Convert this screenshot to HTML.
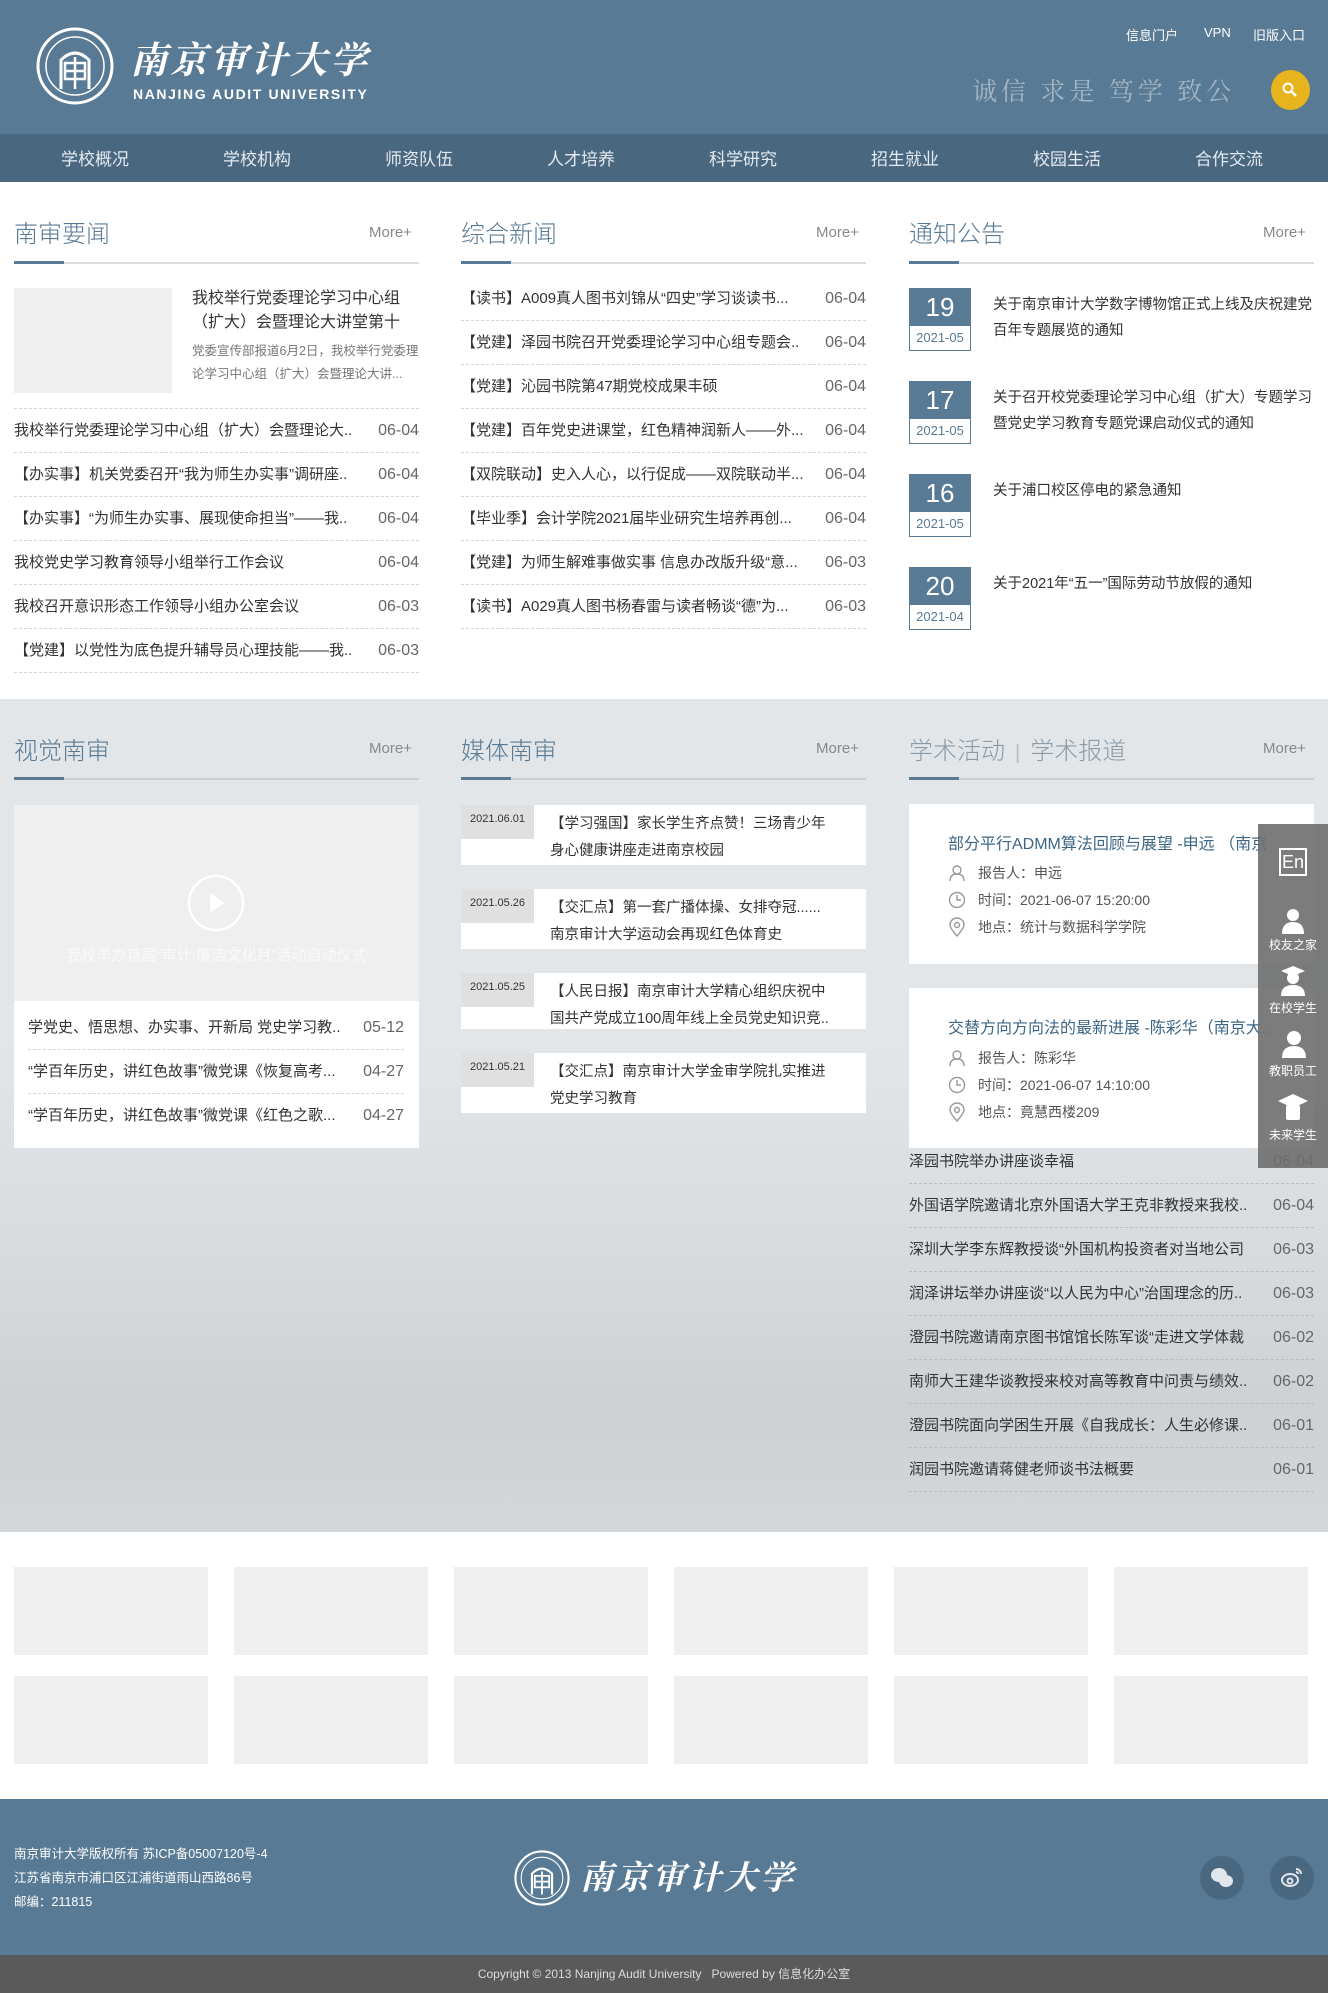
<!DOCTYPE html>
<html><head><meta charset="utf-8"><style>
*{margin:0;padding:0;box-sizing:border-box}
body{width:1328px;height:1993px;position:relative;overflow:hidden;font-family:"Liberation Sans","Noto Sans CJK SC",sans-serif;color:#333;background:#fff}
.a{position:absolute;white-space:nowrap}
.hdr{position:absolute;left:0;top:0;width:1328px;height:134px;background:#587a94}
.nav{position:absolute;left:0;top:134px;width:1328px;height:48px;background:#4a6780}
.nav span{position:absolute;top:11px;width:162px;text-align:center;color:#e4ebf0;font-size:17px}
.ttl{position:absolute;font-size:24px;color:#587a94;font-weight:300}
.more{position:absolute;font-size:15px;color:#888}
.ul{position:absolute;height:2px;background:#dcdcdc}
.ul i{position:absolute;left:0;top:0;width:50px;height:3px;background:#587a94;margin-top:-1px}
.li{position:absolute;font-size:15px;color:#333;height:44px;line-height:44px;border-bottom:1px dashed #d4d4d4}
.li b{position:absolute;right:0;top:0;font-weight:normal;color:#666;font-size:16px}
.db{position:absolute;left:909px;width:62px;height:63px;border:1px solid #587a94;background:#fff}
.db .n{height:37px;background:#587a94;color:#fff;font-size:26px;text-align:center;line-height:37px}
.db .m{color:#587a94;font-size:13px;text-align:center;line-height:24px}
.nt{position:absolute;left:993px;width:320px;font-size:14.5px;line-height:26px;color:#333}
.mc{position:absolute;left:461px;width:405px;height:60px;background:#fff}
.mc .d{position:absolute;left:0;top:0;width:73px;height:34px;background:#e0e0e0;font-size:11px;text-align:center;line-height:28px}
.mc .t{position:absolute;left:89px;top:6px;width:300px;font-size:14.5px;line-height:27px;white-space:nowrap;overflow:hidden}
.card{position:absolute;left:909px;width:405px;height:160px;background:#fff}
.card .h{position:absolute;left:39px;top:26px;font-size:16px;color:#3d6685;white-space:nowrap}
.card .r{position:absolute;left:69px;font-size:14px;color:#555}
.card svg{position:absolute;left:39px}
.side{position:absolute;left:1258px;top:824px;width:70px;height:344px;background:rgba(110,110,110,.9)}
.side div{position:absolute;width:70px;text-align:center;color:#fff;font-size:12px}
.logo{position:absolute;top:1567px;width:194px;height:88px;background:#efefef}
</style></head><body>
<div class="hdr"></div>
<svg class="a" style="left:36px;top:27px" width="78" height="78" viewBox="0 0 78 78"><circle cx="39" cy="39" r="37" fill="none" stroke="#fff" stroke-width="3"/><circle cx="39" cy="39" r="29" fill="none" stroke="#fff" stroke-width="1.5"/><path d="M25 62V33q14-14 28 0v29" fill="none" stroke="#fff" stroke-width="3"/><rect x="29" y="36" width="20" height="16" fill="none" stroke="#fff" stroke-width="2.5"/><path d="M39 30v32M29 44h20" stroke="#fff" stroke-width="2.5"/></svg>
<div class="a" style="left:130px;top:30px;font-family:'Noto Serif CJK SC',serif;font-size:37px;color:#fff;font-style:italic;letter-spacing:3px;font-weight:bold">南京审计大学</div>
<div class="a" style="left:133px;top:86px;font-size:14px;font-weight:bold;color:#fff;letter-spacing:1.6px">NANJING AUDIT UNIVERSITY</div>
<div class="a" style="left:1126px;top:25px;font-size:13px;color:#fff">信息门户</div>
<div class="a" style="left:1204px;top:25px;font-size:13px;color:#fff">VPN</div>
<div class="a" style="left:1253px;top:25px;font-size:13px;color:#fff">旧版入口</div>
<div class="a" style="left:972px;top:72px;font-family:'Noto Serif CJK SC',serif;font-size:25px;color:#a3b6c5;letter-spacing:4px">诚信 求是 笃学 致公</div>
<div class="a" style="left:1271px;top:70px;width:39px;height:40px;border-radius:50%;background:#e8b41e"></div>
<svg class="a" style="left:1281px;top:81px" width="18" height="18"><circle cx="7" cy="7" r="4.5" fill="none" stroke="#fff" stroke-width="2"/><path d="M10 10l5 5" stroke="#fff" stroke-width="2.5"/></svg>
<div class="nav"><span style="left:14px">学校概况</span><span style="left:176px">学校机构</span><span style="left:338px">师资队伍</span><span style="left:500px">人才培养</span><span style="left:662px">科学研究</span><span style="left:824px">招生就业</span><span style="left:986px">校园生活</span><span style="left:1148px">合作交流</span></div>

<!-- section 1 -->
<div class="ttl a" style="left:14px;top:214px">南审要闻</div><div class="more a" style="left:369px;top:224px">More+</div><div class="ul" style="left:14px;top:262px;width:405px"><i></i></div>
<div class="ttl a" style="left:461px;top:214px">综合新闻</div><div class="more a" style="left:816px;top:224px">More+</div><div class="ul" style="left:461px;top:262px;width:405px"><i></i></div>
<div class="ttl a" style="left:909px;top:214px">通知公告</div><div class="more a" style="left:1263px;top:224px">More+</div><div class="ul" style="left:909px;top:262px;width:405px"><i></i></div>

<div class="a" style="left:14px;top:288px;width:158px;height:105px;background:#efefef"></div>
<div class="a" style="left:192px;top:287px;width:228px;font-size:16px;line-height:24px;color:#333;white-space:normal;overflow:hidden;height:48px">我校举行党委理论学习中心组（扩大）会暨理论大讲堂第十一...</div>
<div class="a" style="left:192px;top:340px;width:228px;font-size:12.5px;line-height:23px;color:#777;white-space:normal;overflow:hidden;height:46px">党委宣传部报道6月2日，我校举行党委理论学习中心组（扩大）会暨理论大讲...</div>
<div class="a" style="left:14px;top:408px;width:405px;border-top:1px dashed #d4d4d4"></div>
<div class="li" style="left:14px;top:409px;width:405px">我校举行党委理论学习中心组（扩大）会暨理论大..<b>06-04</b></div>
<div class="li" style="left:14px;top:453px;width:405px">【办实事】机关党委召开“我为师生办实事”调研座..<b>06-04</b></div>
<div class="li" style="left:14px;top:497px;width:405px">【办实事】“为师生办实事、展现使命担当”——我..<b>06-04</b></div>
<div class="li" style="left:14px;top:541px;width:405px">我校党史学习教育领导小组举行工作会议<b>06-04</b></div>
<div class="li" style="left:14px;top:585px;width:405px">我校召开意识形态工作领导小组办公室会议<b>06-03</b></div>
<div class="li" style="left:14px;top:629px;width:405px">【党建】以党性为底色提升辅导员心理技能——我..<b>06-03</b></div>

<div class="li" style="left:461px;top:277px;width:405px">【读书】A009真人图书刘锦从“四史”学习谈读书...<b>06-04</b></div>
<div class="li" style="left:461px;top:321px;width:405px">【党建】泽园书院召开党委理论学习中心组专题会..<b>06-04</b></div>
<div class="li" style="left:461px;top:365px;width:405px">【党建】沁园书院第47期党校成果丰硕<b>06-04</b></div>
<div class="li" style="left:461px;top:409px;width:405px">【党建】百年党史进课堂，红色精神润新人——外...<b>06-04</b></div>
<div class="li" style="left:461px;top:453px;width:405px">【双院联动】史入人心，以行促成——双院联动半...<b>06-04</b></div>
<div class="li" style="left:461px;top:497px;width:405px">【毕业季】会计学院2021届毕业研究生培养再创...<b>06-04</b></div>
<div class="li" style="left:461px;top:541px;width:405px">【党建】为师生解难事做实事 信息办改版升级“意...<b>06-03</b></div>
<div class="li" style="left:461px;top:585px;width:405px">【读书】A029真人图书杨春雷与读者畅谈“德”为...<b>06-03</b></div>

<div class="db" style="top:288px"><div class="n">19</div><div class="m">2021-05</div></div>
<div class="nt" style="top:292px">关于南京审计大学数字博物馆正式上线及庆祝建党百年专题展览的通知</div>
<div class="db" style="top:381px"><div class="n">17</div><div class="m">2021-05</div></div>
<div class="nt" style="top:385px">关于召开校党委理论学习中心组（扩大）专题学习暨党史学习教育专题党课启动仪式的通知</div>
<div class="db" style="top:474px"><div class="n">16</div><div class="m">2021-05</div></div>
<div class="nt" style="top:478px">关于浦口校区停电的紧急通知</div>
<div class="db" style="top:567px"><div class="n">20</div><div class="m">2021-04</div></div>
<div class="nt" style="top:571px">关于2021年“五一”国际劳动节放假的通知</div>

<!-- section 2 -->
<div class="a" style="left:0;top:699px;width:1328px;height:833px;background:linear-gradient(180deg,#e2e6e9 0%,#e2e6e9 40%,#d8dcdf 65%,#cdd1d4 85%,#d3d7da 100%)"></div>
<div class="ttl a" style="left:14px;top:731px">视觉南审</div><div class="more a" style="left:369px;top:740px">More+</div><div class="ul" style="left:14px;top:778px;width:405px;background:#c8ced3"><i></i></div>
<div class="ttl a" style="left:461px;top:731px">媒体南审</div><div class="more a" style="left:816px;top:740px">More+</div><div class="ul" style="left:461px;top:778px;width:405px;background:#c8ced3"><i></i></div>
<div class="ttl a" style="left:909px;top:731px;color:#8a9aa6">学术活动<span style="color:#bbb;margin:0 10px;font-size:20px">|</span>学术报道</div><div class="more a" style="left:1263px;top:740px">More+</div><div class="ul" style="left:909px;top:778px;width:405px;background:#c8ced3"><i></i></div>

<div class="a" style="left:14px;top:805px;width:405px;height:196px;background:#efefef"></div>
<svg class="a" style="left:187px;top:874px" width="58" height="58"><circle cx="29" cy="29" r="27" fill="none" stroke="#fff" stroke-width="2.5"/><path d="M23 19v20l15-10z" fill="#fff"/></svg>
<div class="a" style="left:14px;top:944px;width:405px;text-align:center;font-size:15px;color:#fafafa">我校举办首届“审计·廉洁文化月”活动启动仪式</div>
<div class="a" style="left:14px;top:1001px;width:405px;height:147px;background:#fff"></div>
<div class="li" style="left:28px;top:1006px;width:376px">学党史、悟思想、办实事、开新局 党史学习教..<b>05-12</b></div>
<div class="li" style="left:28px;top:1050px;width:376px">“学百年历史，讲红色故事”微党课《恢复高考...<b>04-27</b></div>
<div class="li" style="left:28px;top:1094px;width:376px;border:none">“学百年历史，讲红色故事”微党课《红色之歌...<b>04-27</b></div>

<div class="mc" style="top:805px"><div class="d">2021.06.01</div><div class="t">【学习强国】家长学生齐点赞！三场青少年<br>身心健康讲座走进南京校园</div></div>
<div class="mc" style="top:889px"><div class="d">2021.05.26</div><div class="t">【交汇点】第一套广播体操、女排夺冠......<br>南京审计大学运动会再现红色体育史</div></div>
<div class="mc" style="top:973px;height:56px"><div class="d">2021.05.25</div><div class="t">【人民日报】南京审计大学精心组织庆祝中<br>国共产党成立100周年线上全员党史知识竞..</div></div>
<div class="mc" style="top:1053px"><div class="d">2021.05.21</div><div class="t">【交汇点】南京审计大学金审学院扎实推进<br>党史学习教育</div></div>

<div class="card" style="top:804px"><div class="h">部分平行ADMM算法回顾与展望 -申远 （南京</div>
<svg style="top:60px" width="18" height="18" viewBox="0 0 18 18" fill="none" stroke="#999" stroke-width="1.4"><circle cx="9" cy="6" r="4"/><path d="M2 17q0-7 7-7t7 7"/></svg><div class="r" style="top:59px">报告人：申远</div>
<svg style="top:87px" width="18" height="18" viewBox="0 0 18 18" fill="none" stroke="#999" stroke-width="1.4"><circle cx="9" cy="9" r="7.5"/><path d="M9 4v5h4"/></svg><div class="r" style="top:86px">时间：2021-06-07 15:20:00</div>
<svg style="top:113px" width="18" height="20" viewBox="0 0 18 20" fill="none" stroke="#999" stroke-width="1.4"><path d="M9 19Q2 11 2 8a7 7 0 0114 0q0 3-7 11z"/><circle cx="9" cy="8" r="2.5"/></svg><div class="r" style="top:113px">地点：统计与数据科学学院</div></div>
<div class="card" style="top:988px"><div class="h">交替方向方向法的最新进展 -陈彩华（南京大..</div>
<svg style="top:61px" width="18" height="18" viewBox="0 0 18 18" fill="none" stroke="#999" stroke-width="1.4"><circle cx="9" cy="6" r="4"/><path d="M2 17q0-7 7-7t7 7"/></svg><div class="r" style="top:60px">报告人：陈彩华</div>
<svg style="top:88px" width="18" height="18" viewBox="0 0 18 18" fill="none" stroke="#999" stroke-width="1.4"><circle cx="9" cy="9" r="7.5"/><path d="M9 4v5h4"/></svg><div class="r" style="top:87px">时间：2021-06-07 14:10:00</div>
<svg style="top:114px" width="18" height="20" viewBox="0 0 18 20" fill="none" stroke="#999" stroke-width="1.4"><path d="M9 19Q2 11 2 8a7 7 0 0114 0q0 3-7 11z"/><circle cx="9" cy="8" r="2.5"/></svg><div class="r" style="top:114px">地点：竟慧西楼209</div></div>

<div class="li" style="left:909px;top:1140px;width:405px;border-bottom-color:#b8bdc1">泽园书院举办讲座谈幸福<b>06-04</b></div>
<div class="li" style="left:909px;top:1184px;width:405px;border-bottom-color:#b8bdc1">外国语学院邀请北京外国语大学王克非教授来我校..<b>06-04</b></div>
<div class="li" style="left:909px;top:1228px;width:405px;border-bottom-color:#b8bdc1">深圳大学李东辉教授谈“外国机构投资者对当地公司<b>06-03</b></div>
<div class="li" style="left:909px;top:1272px;width:405px;border-bottom-color:#b8bdc1">润泽讲坛举办讲座谈“以人民为中心”治国理念的历..<b>06-03</b></div>
<div class="li" style="left:909px;top:1316px;width:405px;border-bottom-color:#b8bdc1">澄园书院邀请南京图书馆馆长陈军谈“走进文学体裁<b>06-02</b></div>
<div class="li" style="left:909px;top:1360px;width:405px;border-bottom-color:#b8bdc1">南师大王建华谈教授来校对高等教育中问责与绩效..<b>06-02</b></div>
<div class="li" style="left:909px;top:1404px;width:405px;border-bottom-color:#b8bdc1">澄园书院面向学困生开展《自我成长：人生必修课..<b>06-01</b></div>
<div class="li" style="left:909px;top:1448px;width:405px;border-bottom-color:#b8bdc1">润园书院邀请蒋健老师谈书法概要<b>06-01</b></div>

<div class="side">
<div style="top:24px"><span style="display:inline-block;border:2px solid #fff;width:28px;height:28px;font-size:18px;line-height:24px">En</span></div>
<svg class="a" style="left:24px;top:84px" width="24" height="26" viewBox="0 0 24 26" fill="#fff"><circle cx="11" cy="7" r="6"/><path d="M0 26q0-12 11-12t11 12z"/></svg>
<div style="top:112px">校友之家</div>
<svg class="a" style="left:22px;top:142px" width="26" height="30" viewBox="0 0 26 30" fill="#fff"><path d="M13 0l12 5-12 5L1 5z"/><circle cx="13" cy="12" r="6"/><path d="M1 30q0-11 12-11t12 11z"/></svg>
<div style="top:175px">在校学生</div>
<svg class="a" style="left:24px;top:206px" width="24" height="28" viewBox="0 0 24 28" fill="#fff"><circle cx="12" cy="8" r="7"/><path d="M0 28q0-12 12-12t12 12z"/></svg>
<div style="top:238px">教职员工</div>
<svg class="a" style="left:20px;top:270px" width="30" height="28" viewBox="0 0 30 28" fill="#fff"><path d="M15 0l15 7-15 7L0 7z"/><rect x="8" y="11" width="14" height="15" rx="2"/></svg>
<div style="top:302px">未来学生</div>
</div>

<!-- logos -->
<div class="logo" style="left:14px"></div><div class="logo" style="left:234px"></div><div class="logo" style="left:454px"></div><div class="logo" style="left:674px"></div><div class="logo" style="left:894px"></div><div class="logo" style="left:1114px"></div>
<div class="logo" style="left:14px;top:1676px"></div><div class="logo" style="left:234px;top:1676px"></div><div class="logo" style="left:454px;top:1676px"></div><div class="logo" style="left:674px;top:1676px"></div><div class="logo" style="left:894px;top:1676px"></div><div class="logo" style="left:1114px;top:1676px"></div>

<!-- footer -->
<div class="a" style="left:0;top:1799px;width:1328px;height:156px;background:#587a94"></div>
<div class="a" style="left:14px;top:1842px;font-size:12.5px;color:#fff;line-height:24px">南京审计大学版权所有 苏ICP备05007120号-4<br>江苏省南京市浦口区江浦街道雨山西路86号<br>邮编：211815</div>
<svg class="a" style="left:514px;top:1850px" width="56" height="56" viewBox="0 0 78 78"><circle cx="39" cy="39" r="37" fill="none" stroke="#fff" stroke-width="3"/><circle cx="39" cy="39" r="29" fill="none" stroke="#fff" stroke-width="1.5"/><path d="M25 62V33q14-14 28 0v29" fill="none" stroke="#fff" stroke-width="3"/><rect x="29" y="36" width="20" height="16" fill="none" stroke="#fff" stroke-width="2.5"/><path d="M39 30v32M29 44h20" stroke="#fff" stroke-width="2.5"/></svg>
<div class="a" style="left:580px;top:1852px;font-family:'Noto Serif CJK SC',serif;font-size:33px;color:#fff;font-style:italic;font-weight:bold;letter-spacing:3px">南京审计大学</div>
<div class="a" style="left:1200px;top:1856px;width:44px;height:44px;border-radius:50%;background:#4a6780"></div>
<div class="a" style="left:1270px;top:1856px;width:44px;height:44px;border-radius:50%;background:#4a6780"></div>
<svg class="a" style="left:1210px;top:1867px" width="24" height="22" viewBox="0 0 24 22" fill="#e0e6eb"><ellipse cx="9" cy="8" rx="8" ry="7"/><ellipse cx="16" cy="14" rx="7" ry="6"/></svg>
<svg class="a" style="left:1280px;top:1866px" width="24" height="22" viewBox="0 0 24 22" fill="none" stroke="#e0e6eb" stroke-width="2"><ellipse cx="10" cy="14" rx="8" ry="6"/><circle cx="10" cy="15" r="2.5"/><path d="M16 3a5 5 0 015 5M16 6a2 2 0 012 2"/></svg>
<div class="a" style="left:0;top:1955px;width:1328px;height:38px;background:#5a5a5a"></div>
<div class="a" style="left:0;top:1965px;width:1328px;text-align:center;font-size:12px;color:#ddd">Copyright © 2013 Nanjing Audit University &nbsp;&nbsp;Powered by 信息化办公室</div>
</body></html>
